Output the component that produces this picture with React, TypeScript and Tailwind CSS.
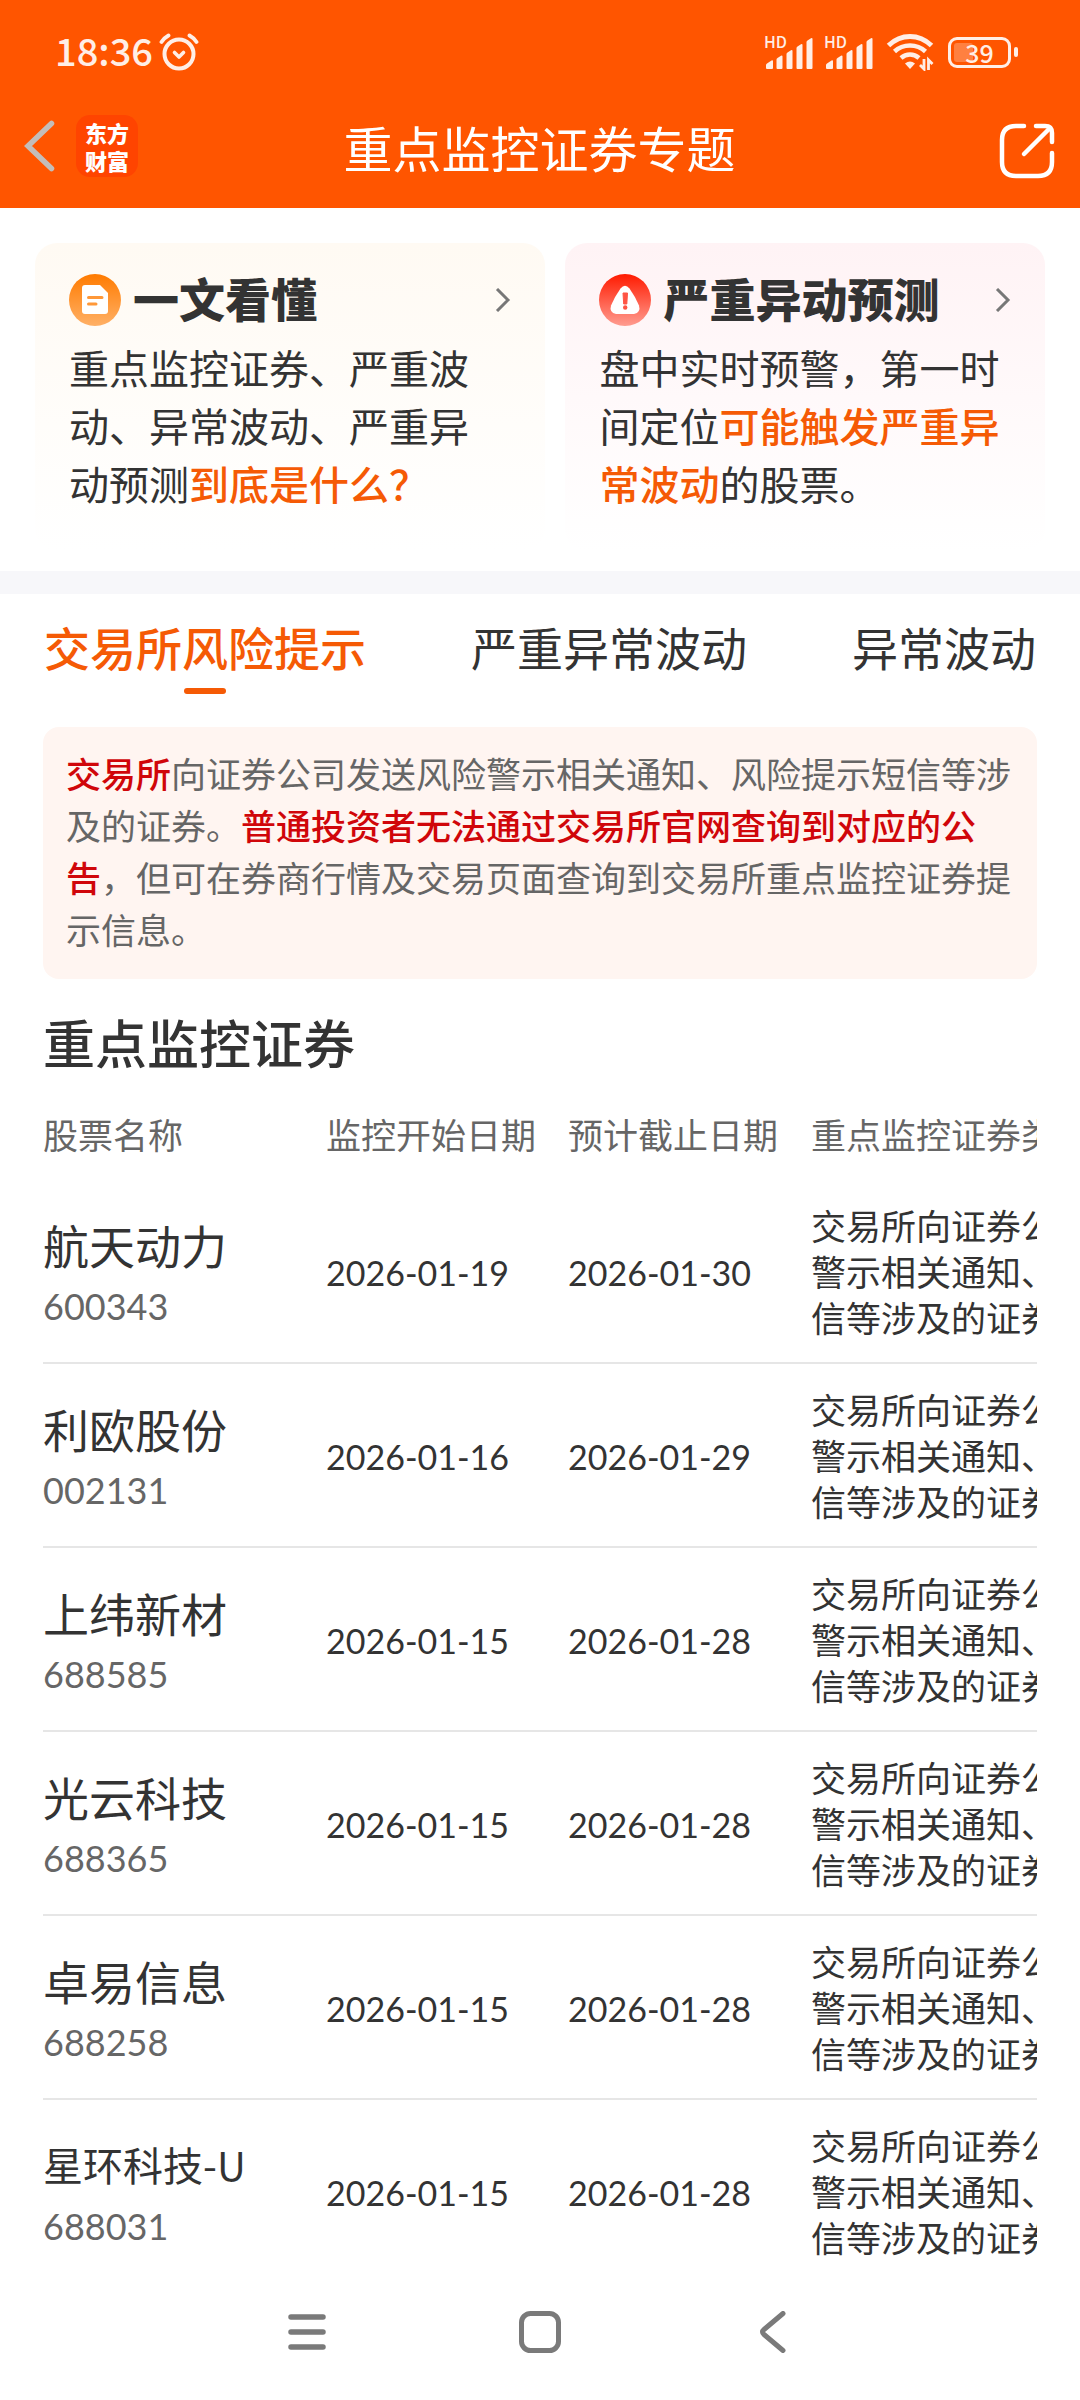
import React, { useState } from 'react'

interface Stock {
  name: string
  code: string
  start: string
  end: string
}

const stocks: Stock[] = [
  { name: '航天动力', code: '600343', start: '2026-01-19', end: '2026-01-30' },
  { name: '利欧股份', code: '002131', start: '2026-01-16', end: '2026-01-29' },
  { name: '上纬新材', code: '688585', start: '2026-01-15', end: '2026-01-28' },
  { name: '光云科技', code: '688365', start: '2026-01-15', end: '2026-01-28' },
  { name: '卓易信息', code: '688258', start: '2026-01-15', end: '2026-01-28' },
  { name: '星环科技-U', code: '688031', start: '2026-01-15', end: '2026-01-28' },
]

const tabs = ['交易所风险提示', '严重异常波动', '异常波动']

const monitorType = '交易所向证券公司发送风险警示相关通知、风险提示短信等涉及的证券'

const AlarmIcon = () => (
  <svg width="40" height="38" viewBox="0 0 40 38" fill="none" stroke="#ffeee6" strokeLinecap="round">
    <circle cx="20" cy="21" r="14.5" strokeWidth="4" />
    <path d="M15.5 19.5l4.500 4.500 4.500-4.500" strokeWidth="3.6" strokeLinejoin="round" />
    <path d="M2.500 9Q5 5 9.500 2.500M37.500 9Q35 5 30.500 2.500" strokeWidth="3.800" />
  </svg>
)

const SignalIcon = () => (
  <svg width="50" height="52" viewBox="0 -8 50 52" fill="#ffeee6">
    <text x="0" y="14" fontSize="16" fontWeight="500">HD</text>
    <path d="M2 34v-3q0-1 1-1.500l4.500-3q1.500-.8 1.500.8v6.700q0 1-1 1H3q-1 0-1-1z" />
    <path d="M12.500 34V25.500q0-1 1-1.500l3.500-2.300q1.500-.8 1.500.8V34q0 1-1 1h-4q-1 0-1-1z" />
    <path d="M22.500 34V20q0-1 1-1.500l3.500-2.300q1.500-.8 1.500.8V34q0 1-1 1h-4q-1 0-1-1z" />
    <path d="M32.500 34V14q0-1 1-1.500l3.500-2.300q1.500-.8 1.500.8V34q0 1-1 1h-4q-1 0-1-1z" />
    <path d="M42.500 34V8q0-1 1-1.500l3.500-2.300q1.500-.8 1.500.8V34q0 1-1 1h-4q-1 0-1-1z" />
  </svg>
)

const WifiIcon = () => (
  <svg width="48" height="38" viewBox="0 0 48 38" fill="none" stroke="#ffeee6">
    <path d="M2.500 12.500Q12 3.500 24 3.500T45.500 12.500" strokeWidth="5" />
    <path d="M8.500 18.500Q15 12.500 24 12.500T39.500 18.500" strokeWidth="4.500" />
    <path d="M15 25Q19 21.500 24 21.500T33 25" strokeWidth="4.500" />
    <path d="M19 30.500Q24 26.500 29 30.500L24 36z" fill="#ffeee6" stroke="none" />
    <path d="M38 26v10l-4-4M42.500 37v-10l4 4" strokeWidth="2.800" />
  </svg>
)

const Battery = () => (
  <div className="flex items-center gap-[3px]">
    <div className="relative flex h-[31px] w-[63px] items-center justify-center rounded-[9px] border-3 border-[#ffeee6]">
      <div className="absolute top-[3px] bottom-[3px] left-[3px] w-[19px] rounded-[3px] bg-[#ff8040]" />
      <span className="relative text-[25px] leading-[37px] font-medium">39</span>
    </div>
    <div className="h-2.5 w-1 rounded-xs bg-[#ffeee6]" />
  </div>
)

const ShareIcon = () => (
  <svg width="56" height="56" viewBox="0 0 56 56" fill="none" stroke="#fff" strokeWidth="4.500" strokeLinecap="round" strokeLinejoin="round">
    <path d="M25 3H17Q3 3 3 17V39Q3 53 17 53H39Q53 53 53 39V30" />
    <path d="M37 3H46Q53 3 53 10V19" />
    <path d="M25 31L51 5" />
  </svg>
)

const ChevronRight = () => (
  <svg width="16" height="24" viewBox="0 0 16 24" fill="none" stroke="#777" strokeWidth="3">
    <path d="M2 1l11 11L2 23" />
  </svg>
)

const DocIcon = () => (
  <svg width="52" height="52" viewBox="0 0 52 52">
    <defs>
      <linearGradient id="doc" x1="0" y1="0" x2="0" y2="1">
        <stop offset="0" stopColor="#ff7b00" />
        <stop offset="1" stopColor="#ffb066" />
      </linearGradient>
    </defs>
    <circle cx="26" cy="26" r="26" fill="url(#doc)" />
    <path d="M16 11H31L39 19V37Q39 40 36 40H16Q13 40 13 37V14Q13 11 16 11z" fill="#fff" />
    <path d="M19.500 23.500H33M19.500 30H27" stroke="#ff9838" strokeWidth="3" strokeLinecap="round" />
  </svg>
)

const AlertIcon = () => (
  <svg width="52" height="52" viewBox="0 0 52 52">
    <defs>
      <linearGradient id="alert" x1="0" y1="0" x2="0" y2="1">
        <stop offset="0" stopColor="#ff1a00" />
        <stop offset="1" stopColor="#ff9c90" />
      </linearGradient>
    </defs>
    <circle cx="26" cy="26" r="26" fill="url(#alert)" />
    <path d="M21.500 14.500Q26 9 30.500 14.500Q36.500 23 40 31.500Q42 38.500 35 40H17Q10 38.500 12 31.500Q15.500 23 21.500 14.500z" fill="#fff" />
    <path d="M24 19h4.500l-.7 11h-3.100z" fill="#ff5444" stroke="#ff5444" strokeLinejoin="round" />
    <circle cx="26.200" cy="33.500" r="2.200" fill="#ff5444" />
  </svg>
)

const StatusBar = () => (
  <div className="flex h-20 items-center justify-between pt-6 pr-[62px] pl-[55px] text-[#ffeee6]">
    <div className="flex items-center gap-1.5">
      <span className="pb-1 text-[38px] leading-none font-medium">18:36</span>
      <AlarmIcon />
    </div>
    <div className="flex items-center">
      <SignalIcon />
      <span className="ml-2.5"><SignalIcon /></span>
      <span className="ml-3"><WifiIcon /></span>
      <span className="ml-3.5"><Battery /></span>
    </div>
  </div>
)

const PageHeader = () => (
  <header className="bg-[#ff5500]">
    <StatusBar />
    <div className="grid h-32 grid-cols-[1fr_auto_1fr] items-center pt-1 pr-[25px] pl-6">
      <div className="flex items-center gap-5">
        <button aria-label="返回">
          <svg width="32" height="52" viewBox="0 0 32 52" fill="none" stroke="#c4bdb9" strokeWidth="5.500" strokeLinecap="round">
            <path d="M27.500 3.500L4 26L27.500 48.500" />
          </svg>
        </button>
        <a href="#home" className="flex size-[62px] flex-col items-center justify-center rounded-[14px] bg-[#ff4400] text-[22px] leading-[28px] font-black text-white">
          <span>东方</span>
          <span>财富</span>
        </a>
      </div>
      <h1 className="text-[49px] leading-none text-white">重点监控证券专题</h1>
      <button aria-label="分享" className="mt-2.5 justify-self-end">
        <ShareIcon />
      </button>
    </div>
  </header>
)

interface GuideCardProps {
  icon: React.ReactNode
  title: string
  className: string
  children: React.ReactNode
}

const GuideCard: React.FC<GuideCardProps> = ({ icon, title, className, children }) => (
  <a href="#guide" className={`block rounded-[22px] bg-linear-to-b to-white px-[34px] pt-[31px] pb-[39px] ${className}`}>
    <div className="flex items-center">
      {icon}
      <h2 className="ml-3 flex-1 self-start text-[46px] leading-[46px] font-black">{title}</h2>
      <ChevronRight />
    </div>
    <p className="mt-3 pr-2 text-[40px] leading-[58px]">{children}</p>
  </a>
)

const RiskNotice = () => (
  <p className="rounded-2xl bg-[#fff5f1] px-[23px] pt-5 pb-6 text-[35px] leading-[52px] text-[#666]">
    <strong className="font-medium text-[#d0060a]">交易所</strong>
    向证券公司发送风险警示相关通知、风险提示短信等涉及的证券。
    <strong className="font-medium text-[#d0060a]">普通投资者无法通过交易所官网查询到对应的公告</strong>
    ，但可在券商行情及交易页面查询到交易所重点监控证券提示信息。
  </p>
)

const StockTable = () => (
  <div className="overflow-x-auto [scrollbar-width:none]">
    <table className="w-[1208px] table-fixed text-left text-[35px]">
      <thead>
        <tr className="h-[92px] text-[#666]">
          <th className="w-[283px] font-normal">股票名称</th>
          <th className="w-[242px] font-normal">监控开始日期</th>
          <th className="w-[243px] font-normal">预计截止日期</th>
          <th className="font-normal">重点监控证券类型</th>
        </tr>
      </thead>
      <tbody>
        {stocks.map((stock) => (
          <tr key={stock.code} className="border-b-2 border-[#e6e6e6] last:border-b-0">
            <td className="pt-2.5">
              <div className={stock.name.length > 5 ? 'text-[40px] leading-[60px]' : 'text-[46px] leading-[60px]'}>
                {stock.name}
              </div>
              <div className="font-[Lato] text-[36px] leading-[64px] text-[#666]">{stock.code}</div>
            </td>
            <td className="pt-0.5 font-[Lato] text-[34px]">{stock.start}</td>
            <td className="pt-0.5 font-[Lato] text-[34px]">{stock.end}</td>
            <td className="py-[22px] leading-[46px]">{monitorType}</td>
          </tr>
        ))}
      </tbody>
    </table>
  </div>
)

const SystemNav = () => (
  <nav className="mt-auto flex h-[115px] items-start justify-center gap-[191px] pt-[26px]">
    <button aria-label="最近任务">
      <svg width="42" height="42" viewBox="0 0 42 42" stroke="#7a7a7a" strokeWidth="5.500" strokeLinecap="round">
        <path d="M5 6H37M5 21H37M5 36H37" />
      </svg>
    </button>
    <button aria-label="主屏幕">
      <svg width="42" height="42" viewBox="0 0 42 42" fill="none" stroke="#7a7a7a" strokeWidth="5">
        <rect x="2.500" y="2.500" width="37" height="37" rx="9" />
      </svg>
    </button>
    <button aria-label="后退">
      <svg width="42" height="42" viewBox="0 0 42 42" fill="none" stroke="#7a7a7a" strokeWidth="5" strokeLinecap="round" strokeLinejoin="round">
        <path d="M31 2.500L12 18.500Q9 21 12 23.500L31 39.500" />
      </svg>
    </button>
  </nav>
)

const App: React.FC = () => {
  const [activeTab, setActiveTab] = useState(tabs[0])

  return (
    <div className="flex min-h-screen flex-col bg-white font-['Noto_Sans_CJK_SC',sans-serif] text-[#333]">
      <PageHeader />

      <main>
        {/* Guide cards */}
        <section className="grid grid-cols-[511fr_480fr] gap-5 border-b-[23px] border-[#f7f7fa] px-[35px] pt-[35px] pb-5">
          <GuideCard icon={<DocIcon />} title="一文看懂" className="from-[#fffaf3]">
            重点监控证券、严重波动、异常波动、严重异动预测
            <span className="font-medium text-[#f55a05]">到底是什么？</span>
          </GuideCard>
          <GuideCard icon={<AlertIcon />} title="严重异动预测" className="from-[#fff3f5]">
            盘中实时预警，第一时间定位
            <span className="font-medium text-[#f55a05]">可能触发严重异常波动</span>
            的股票。
          </GuideCard>
        </section>

        {/* Tabs */}
        <div role="tablist" className="flex justify-between px-11 pt-4">
          {tabs.map((tab) => (
            <button
              key={tab}
              role="tab"
              aria-selected={tab === activeTab}
              onClick={() => setActiveTab(tab)}
              className={`flex h-[117px] flex-col items-center text-[46px] leading-[72px] ${
                tab === activeTab ? 'font-medium text-[#f55a05]' : ''
              }`}
            >
              {tab}
              {tab === activeTab && <span className="mt-1.5 h-1.5 w-[42px] rounded-full bg-[#f55a05]" />}
            </button>
          ))}
        </div>

        <section className="px-[43px]">
          <RiskNotice />
          <h2 className="pt-[27px] pb-2.5 text-[52px] leading-[72px] font-medium">重点监控证券</h2>
          <StockTable />
        </section>
      </main>

      <SystemNav />
    </div>
  )
}

export default App
